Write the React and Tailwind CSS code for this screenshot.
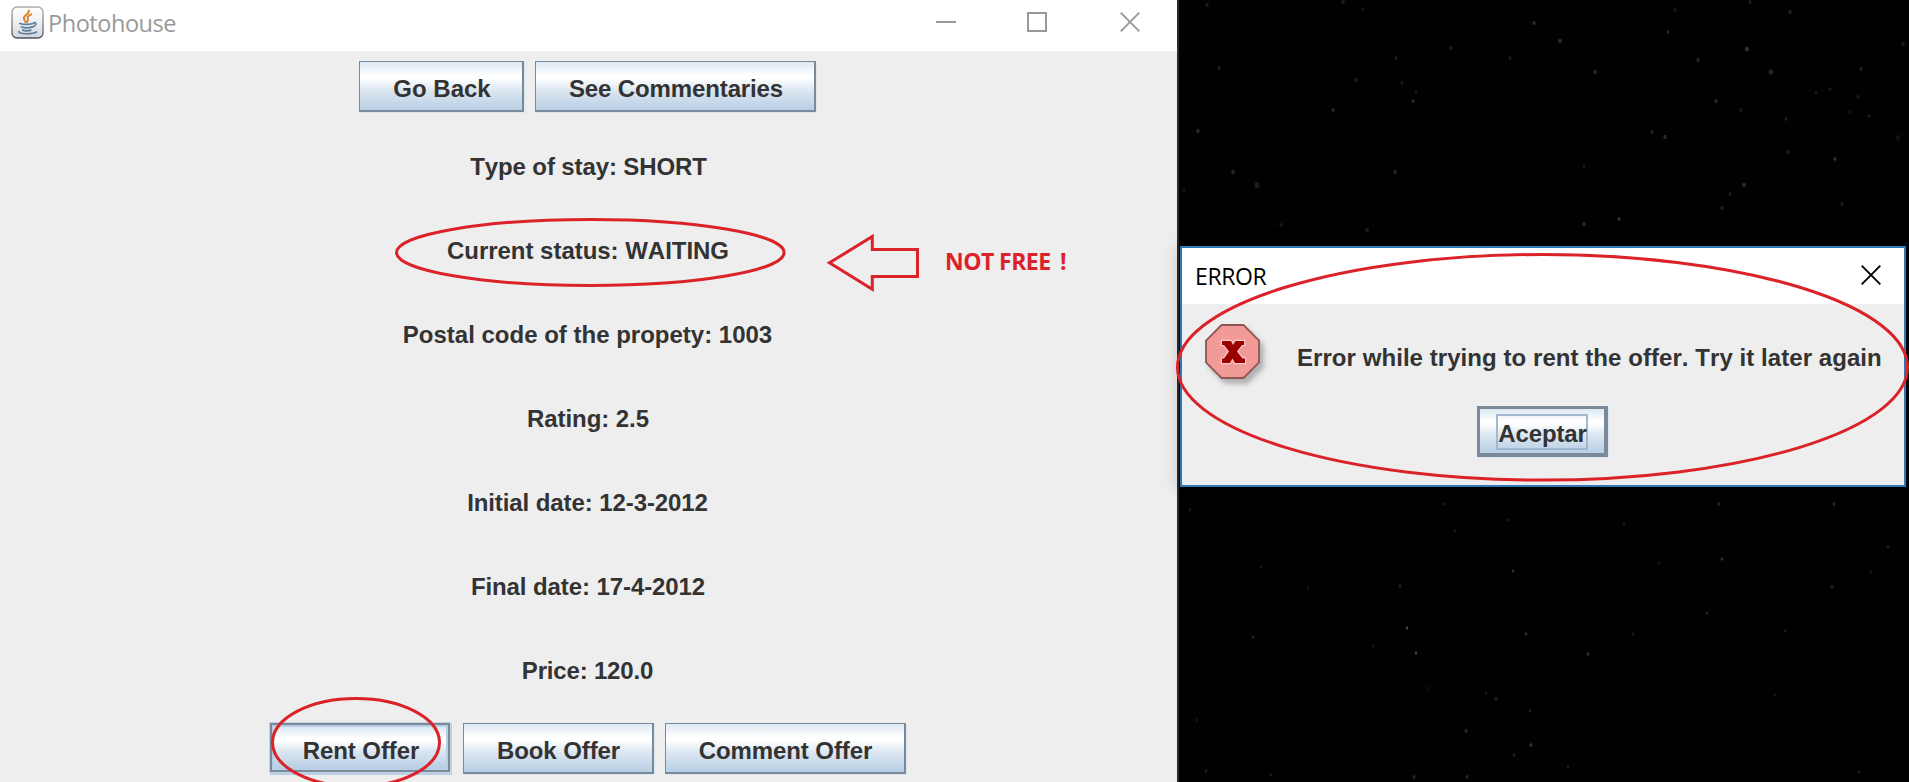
import React from "react";

const RED = "#db2229";

const STARS = [
  [1407, 628, 1.3, 0.6], [1416, 653, 1.4, 0.6], [1513, 571, 1.2, 0.5], [1526, 634, 1.4, 0.4],
  [1588, 654, 1.5, 0.4], [1722, 559, 1.4, 0.45], [1719, 504, 1.6, 0.3], [1834, 504, 1.5, 0.35],
  [1888, 547, 1.4, 0.3], [1444, 504, 1.5, 0.22], [1455, 531, 1.6, 0.2], [1508, 520, 1.3, 0.3],
  [1400, 586, 1.5, 0.28], [1308, 588, 1.4, 0.2], [1261, 567, 1.4, 0.2], [1253, 637, 1.3, 0.3],
  [1496, 699, 1.5, 0.28], [1486, 693, 1.3, 0.2], [1466, 731, 1.5, 0.38], [1531, 745, 1.6, 0.4],
  [1514, 755, 1.5, 0.28], [1414, 777, 1.5, 0.35], [1467, 777, 1.5, 0.35], [1206, 771, 1.4, 0.3],
  [1271, 775, 1.4, 0.25], [1568, 767, 1.5, 0.25], [1832, 587, 1.5, 0.3], [1707, 613, 1.3, 0.3],
  [1785, 631, 1.4, 0.25], [1633, 634, 1.4, 0.25], [1659, 563, 1.4, 0.2], [1775, 695, 1.4, 0.2],
  [1190, 510, 1.4, 0.22], [1871, 572, 1.3, 0.22], [1530, 711, 1.4, 0.25], [1197, 720, 1.4, 0.2],
  [1859, 772, 1.4, 0.25], [1624, 524, 1.3, 0.2], [1373, 646, 1.3, 0.2], [1427, 688, 1.2, 0.2],
  [1207, 5, 1.8, 0.22], [1219, 68, 1.5, 0.3], [1198, 131, 1.8, 0.35], [1233, 172, 1.9, 0.32],
  [1257, 185, 2.5, 0.25], [1184, 190, 1.6, 0.2], [1281, 225, 1.7, 0.2], [1333, 110, 1.5, 0.4],
  [1356, 80, 1.8, 0.22], [1396, 58, 1.6, 0.28], [1402, 83, 1.7, 0.22], [1413, 101, 1.5, 0.35],
  [1416, 92, 1.4, 0.2], [1451, 48, 1.8, 0.25], [1395, 172, 1.7, 0.38], [1367, 230, 1.9, 0.25],
  [1343, 2, 1.8, 0.25], [1363, 9, 1.6, 0.2], [1534, 23, 1.6, 0.42], [1560, 41, 2, 0.38],
  [1510, 58, 1.6, 0.22], [1595, 72, 1.7, 0.35], [1675, 10, 1.6, 0.25], [1668, 32, 1.5, 0.38],
  [1652, 132, 1.6, 0.32], [1665, 137, 1.7, 0.4], [1584, 166, 1.5, 0.22], [1584, 224, 1.8, 0.38],
  [1619, 219, 1.5, 0.48], [1750, 2, 1.5, 0.3], [1790, 12, 1.8, 0.28], [1747, 49, 2, 0.45],
  [1698, 60, 1.7, 0.38], [1771, 72, 2.1, 0.34], [1716, 101, 1.8, 0.34], [1741, 110, 1.7, 0.24],
  [1861, 69, 1.7, 0.25], [1903, 44, 1.8, 0.22], [1816, 93, 1.6, 0.2], [1830, 89, 1.6, 0.2],
  [1869, 116, 1.4, 0.3], [1786, 119, 1.5, 0.25], [1788, 152, 1.5, 0.28], [1835, 159, 1.5, 0.42],
  [1744, 185, 1.8, 0.38], [1730, 194, 1.6, 0.25], [1722, 208, 1.8, 0.25], [1842, 204, 1.6, 0.28],
  [1858, 97, 1.8, 0.18], [1850, 112, 1.5, 0.2], [1898, 138, 2.4, 0.15],
];

function Desktop() {
  return (
    <svg className="pointer-events-none absolute inset-0" width="1909" height="782">
      {STARS.map(([x, y, r, o], i) => (
        <ellipse key={i} cx={x} cy={y} rx={r} ry={r * 1.3} fill="#b8b4b4" opacity={o * 0.58} />
      ))}
    </svg>
  );
}

function JavaIcon() {
  return (
    <svg className="shrink-0" width="33" height="33" viewBox="0 0 33 33" fill="none">
      <defs>
        <linearGradient id="javaTile" x1="0" y1="0" x2="0" y2="1">
          <stop offset="0" stopColor="#ffffff" />
          <stop offset="0.5" stopColor="#eef0f2" />
          <stop offset="1" stopColor="#cfd3d8" />
        </linearGradient>
        <linearGradient id="javaEdge" x1="0" y1="0" x2="0" y2="1">
          <stop offset="0" stopColor="#a9aeb4" />
          <stop offset="1" stopColor="#4c545e" />
        </linearGradient>
      </defs>
      <rect x="1" y="1" width="31" height="31" rx="5" fill="url(#javaTile)" stroke="url(#javaEdge)" strokeWidth="1.3" />
      <path d="M17.800 4.500c1 3.600-6 5-4.900 8.300.4 1.200 1.500 2 1.700 3.300M20.300 8.300c-2.700 1.300-4.600 2.500-3.500 4.400.5 1 .6 1.900-.6 3.200" stroke="#e0822e" strokeWidth="2" strokeLinecap="round" />
      <path d="M8.800 17.500c4 1.300 11 1.200 14-.2M10.500 21c3 .9 8 .9 10.800-.1M11.800 24.200c2.500.8 5.500.8 8 0" stroke="#5b7d9c" strokeWidth="1.800" strokeLinecap="round" />
      <path d="M23 16.500c3.200-.6 2.600 3-1 4.200" stroke="#5b7d9c" strokeWidth="1.500" strokeLinecap="round" />
      <path d="M8 25.300c-1.500 2.800 13 3.300 17.500.7" stroke="#5b7d9c" strokeWidth="1.600" strokeLinecap="round" />
    </svg>
  );
}

function Cross({ className }) {
  return (
    <svg className={className} width="20" height="20" viewBox="0 0 20 20" fill="none" stroke="currentColor">
      <path d="M.7.700 19.300 19.300M19.300.700.7 19.300" strokeWidth="1.900" />
    </svg>
  );
}

const FACE = "bg-[linear-gradient(180deg,#dde8f3_0%,#ffffff_28%,#ffffff_34%,#dbe6f1_60%,#b8cfe5_100%)]";

function MetalButton({ className, children }) {
  return (
    <button
      className={`${FACE} flex h-[51px] shrink-0 items-center justify-center whitespace-nowrap border border-r-2 border-b-2 border-[#7a8a99] pt-[5px] pl-[2px] font-bold shadow-[1px_1px_0_0_#dde6ef] ${className}`}
    >
      {children}
    </button>
  );
}

const DETAILS = [
  ["Type of stay: SHORT", "tracking-[-0.12px] pl-[2px]"],
  ["Current status: WAITING", "tracking-[-0.03px] pl-[1px]"],
  ["Postal code of the propety: 1003", ""],
  ["Rating: 2.5", "tracking-[-0.06px] pl-[1px]"],
  ["Initial date: 12-3-2012", "tracking-[-0.09px]"],
  ["Final date: 17-4-2012", "tracking-[-0.09px] pl-[1px]"],
  ["Price: 120.0", "tracking-[-0.18px]"],
];

function MainWindow() {
  return (
    <section className="flex h-full w-[1177px] shrink-0 flex-col bg-[#eeeeee]">
      <header className="flex h-[51px] shrink-0 items-center bg-white pl-[11px] text-[#999999]">
        <div className="flex h-full grow items-start gap-1 pt-[6px]">
          <JavaIcon />
          <h1 className="font-['Open_Sans',sans-serif] text-[23.5px] leading-[34px] tracking-[-0.45px]">Photohouse</h1>
        </div>
        <div className="flex h-full items-start gap-[71px] pt-[12px] pr-[37px]">
          <svg width="20" height="20"><path d="M0 10h20" stroke="currentColor" strokeWidth="2" /></svg>
          <svg width="20" height="20"><rect x="1" y="1" width="18" height="18" fill="none" stroke="currentColor" strokeWidth="2" /></svg>
          <Cross className="ml-[2px]" />
        </div>
      </header>
      <main className="flex grow flex-col items-center pt-[10px] pr-[2px]">
        <div className="flex gap-[11px]">
          <MetalButton className="w-[165px]">Go Back</MetalButton>
          <MetalButton className="w-[281px] tracking-[-0.12px]">See Commentaries</MetalButton>
        </div>
        <ul className="mt-[13px] flex flex-col items-center font-bold">
          {DETAILS.map(([line, fit]) => (
            <li key={line} className={`flex h-[84px] items-center whitespace-nowrap ${fit}`}>{line}</li>
          ))}
        </ul>
        <div className="mt-[10px] flex gap-[11px]">
          <button className="mr-[2px] flex h-[49px] w-[180px] items-center justify-center border-2 border-[#7a8a99] bg-[#b8cfe5] p-[2px] font-bold shadow-[0_0_0_1px_#c3d3e4,1px_2px_0_1px_#b8cfe5]">
            <span className={`${FACE} flex h-full w-full items-center justify-center pt-[7px] pl-[3px] tracking-[-0.08px]`}>Rent Offer</span>
          </button>
          <MetalButton className="w-[191px] tracking-[-0.08px]">Book Offer</MetalButton>
          <MetalButton className="w-[241px] tracking-[-0.08px]">Comment Offer</MetalButton>
        </div>
      </main>
    </section>
  );
}

function ErrorIcon() {
  return (
    <svg className="shrink-0" width="66" height="66" viewBox="0 0 66 66">
      <defs>
        <filter id="iconShadow" x="-20%" y="-20%" width="150%" height="150%">
          <feDropShadow dx="4" dy="5" stdDeviation="2.500" floodColor="#555" floodOpacity="0.4" />
        </filter>
      </defs>
      <path d="M16.500 1h22L54 16.500v22L38.500 54h-22L1 38.500v-22z" fill="#f19a98" stroke="#8c5654" strokeWidth="1.800" filter="url(#iconShadow)" />
      <path d="M17 17h9l2 4 2.500-4H39v4h-2l-5 6.500 5.500 7H40v4.500H30l-2.500-4.500-2.500 4.500h-8v-4.500h2l5-7-5-6.500h-2z" fill="#990000" stroke="#fbc9c4" strokeWidth="2.400" paintOrder="stroke" />
    </svg>
  );
}

function ErrorDialog() {
  return (
    <section className="mt-[246px] ml-[1px] flex h-[241px] w-[726px] shrink-0 flex-col border-2 border-[#3078b4] bg-[#eeeeee] shadow-[0_0_14px_2px_rgba(0,0,0,0.18)]">
      <header className="flex h-[56px] shrink-0 justify-between bg-white pt-[11px] pr-[23px] pl-[13px] text-black">
        <h2 className="font-['Open_Sans',sans-serif] text-[23px] leading-[34px] tracking-[-0.4px]">ERROR</h2>
        <Cross className="mt-[6px]" />
      </header>
      <div className="flex h-[102px] shrink-0 items-start pt-[20px] pl-[23px]">
        <ErrorIcon />
        <p className="mt-[20px] ml-[26px] whitespace-nowrap font-bold leading-[28px] tracking-[0.06px]">
          Error while trying to rent the offer. Try it later again
        </p>
      </div>
      <div className="flex justify-center pr-[1px]">
        <button className={`${FACE} flex h-[51px] w-[131px] items-center justify-center border-[3px] border-r-4 border-b-4 border-[#7a8a99] font-bold shadow-[1px_1px_0_0_#dde6ef]`}>
          <span className="mt-[1px] flex h-[36px] w-[92px] items-center justify-center border-2 border-[#a3b8cc] pt-[5px] pl-[1px] whitespace-nowrap tracking-[-0.1px]">
            Aceptar
          </span>
        </button>
      </div>
    </section>
  );
}

function Annotations() {
  return (
    <>
      <svg className="pointer-events-none absolute inset-0" width="1909" height="782" fill="none" stroke={RED} strokeWidth="3">
        <ellipse cx="590.3" cy="252.5" rx="193.800" ry="33" />
        <ellipse cx="356" cy="742.5" rx="83.500" ry="44" />
        <ellipse cx="1542.500" cy="367.3" rx="365" ry="112.800" />
        <path d="M829.500 262.800 872.300 236.500V249.500H917.500V276.500H872.300V289.300Z" />
      </svg>
      <p className="absolute top-[244px] left-[945px] whitespace-nowrap font-['Open_Sans',sans-serif] text-[23px] leading-[34px] font-bold tracking-[-0.55px] text-[#db2229]">
        NOT FREE <span className="ml-[4px]">!</span>
      </p>
    </>
  );
}

export default function App() {
  return (
    <div className="relative flex h-[782px] w-[1909px] overflow-hidden bg-[#020102] font-['Liberation_Sans',Arial,sans-serif] text-[24px] leading-[28px] text-[#333333] [font-kerning:none]">
      <Desktop />
      <MainWindow />
      <div className="flex grow items-start border-l-2 border-[#2a2d30]">
        <ErrorDialog />
      </div>
      <Annotations />
    </div>
  );
}
